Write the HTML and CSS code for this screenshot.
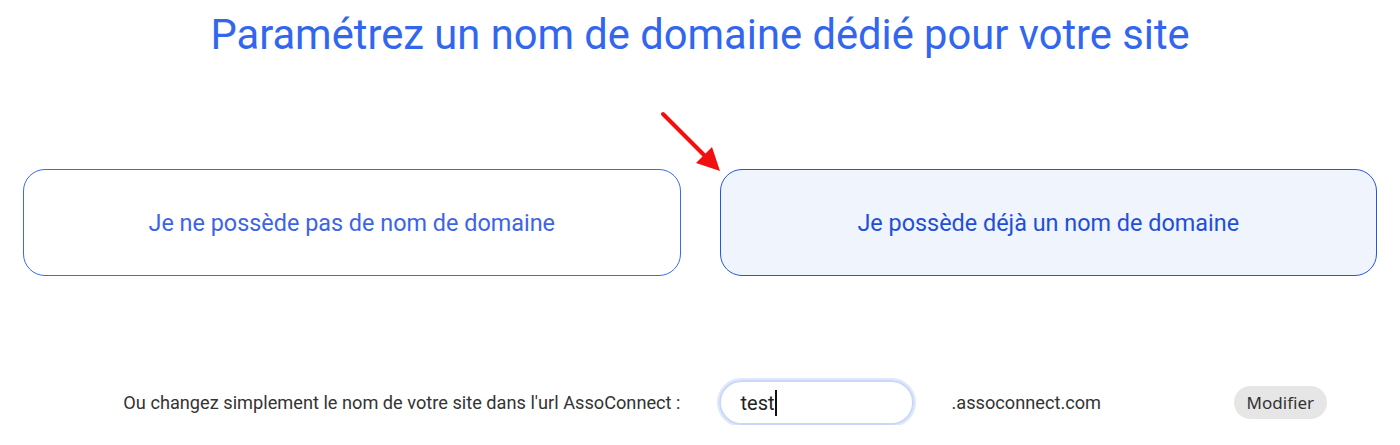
FILE: index.html
```html
<!DOCTYPE html>
<html lang="fr">
<head>
  <meta charset="UTF-8" />
  <title>Nom de domaine</title>
  <link rel="stylesheet" href="styles.css">
</head>
<body>
  <div class="page">
    <h1>Paramétrez un nom de domaine dédié pour votre site</h1>

    <div class="choices">
      <div class="choice">Je ne possède pas de nom de domaine</div>
      <div class="choice selected">
        <svg class="arrow" width="72" height="72" viewBox="0 0 72 72">
          <line x1="6" y1="6" x2="52" y2="52" stroke="#f01010" stroke-width="4" stroke-linecap="round" />
          <polygon points="63,63 39,55 55,39" fill="#f01010" />
        </svg>
        Je possède déjà un nom de domaine
      </div>
    </div>

    <div class="rename">
      <div class="rename-label">Ou changez simplement le nom de votre site dans l'url AssoConnect :</div>
      <div class="rename-form">
        <div class="slug">test<span class="caret"></span></div>
        <span class="suffix">.assoconnect.com</span>
        <button>Modifier</button>
      </div>
    </div>
  </div>
</body>
</html>
```

FILE: styles.css
```css
* {
  box-sizing: border-box;
}

body {
  font-family: Roboto, sans-serif;
  margin: 0;
  padding: 0;
  background: #fff;
}

.page {
  padding: 0 23px;
}

h1 {
  margin: 0;
  padding-top: 10px;
  text-align: center;
  font-weight: 400;
  font-size: 41.7px;
  color: #3366ee;
}

.choices {
  display: grid;
  grid-template-columns: 1fr 1fr;
  gap: 39px;
  margin-top: 110px;
}

.choice {
  position: relative;
  height: 107px;
  display: flex;
  align-items: center;
  justify-content: center;
  border: 1px solid #3d6ae8;
  border-radius: 22px;
  font-size: 23.4px;
  color: #3d63e8;
}

.choice.selected {
  background-color: #eff4fd;
  border-color: #2456e0;
  color: #1f4fd9;
}

.arrow {
  position: absolute;
  left: -64px;
  top: -62px;
}

.rename {
  display: grid;
  grid-template-columns: 1fr 1fr;
  gap: 39px;
  align-items: center;
  margin-top: 104px;
}

.rename-label {
  text-align: right;
  font-size: 18.2px;
  color: #333;
}

.rename-form {
  display: flex;
  align-items: center;
}

.slug {
  width: 195px;
  height: 45px;
  margin-left: -1px;
  padding: 0 20px;
  display: flex;
  align-items: center;
  border: 2px solid #c9d7f8;
  border-radius: 23px;
  box-shadow: 0 0 0 2px #dfe7fb;
  font-size: 20px;
  color: #222;
}

.caret {
  display: inline-block;
  width: 2px;
  height: 26px;
  background: #111;
}

.suffix {
  margin-left: 38px;
  font-size: 18.2px;
  color: #333;
}

button {
  margin-left: auto;
  margin-right: 50px;
  height: 33px;
  padding: 0 13px;
  border: none;
  border-radius: 17px;
  background-color: #e6e6e6;
  font-family: "Noto Sans", sans-serif;
  font-size: 17px;
  color: #333;
}
```
